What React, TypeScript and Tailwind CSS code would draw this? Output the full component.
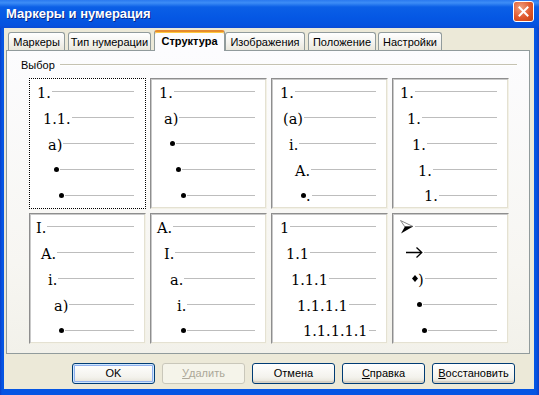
import React from "react";

type Item = { indent: number; text?: string; kind?: "dot" | "dotPeriod" | "arrowhead" | "arrow" | "diamond" };

const cells: Item[][] = [
  [
    { indent: 8, text: "1." },
    { indent: 14, text: "1.1." },
    { indent: 19, text: "a)" },
    { indent: 25, kind: "dot" },
    { indent: 30, kind: "dot" },
  ],
  [
    { indent: 9, text: "1." },
    { indent: 14, text: "a)" },
    { indent: 20, kind: "dot" },
    { indent: 26, kind: "dot" },
    { indent: 31, kind: "dot" },
  ],
  [
    { indent: 9, text: "1." },
    { indent: 12, text: "(a)" },
    { indent: 18, text: "i." },
    { indent: 24, text: "A." },
    { indent: 30, kind: "dotPeriod" },
  ],
  [
    { indent: 8, text: "1." },
    { indent: 15, text: "1." },
    { indent: 20, text: "1." },
    { indent: 26, text: "1." },
    { indent: 32, text: "1." },
  ],
  [
    { indent: 7, text: "I." },
    { indent: 12, text: "A." },
    { indent: 19, text: "i." },
    { indent: 25, text: "a)" },
    { indent: 30, kind: "dot" },
  ],
  [
    { indent: 7, text: "A." },
    { indent: 14, text: "I." },
    { indent: 20, text: "a." },
    { indent: 27, text: "i." },
    { indent: 31, kind: "dot" },
  ],
  [
    { indent: 9, text: "1" },
    { indent: 15, text: "1.1" },
    { indent: 20, text: "1.1.1" },
    { indent: 26, text: "1.1.1.1" },
    { indent: 32, text: "1.1.1.1.1" },
  ],
  [
    { indent: 8, kind: "arrowhead" },
    { indent: 14, kind: "arrow" },
    { indent: 20, kind: "diamond" },
    { indent: 25, kind: "dot" },
    { indent: 30, kind: "dot" },
  ],
];

const tabs = [
  { label: "Маркеры", cls: "ml-[4px] w-[57px]" },
  { label: "Тип нумерации", cls: "ml-[3px] w-[83px]" },
  { label: "Структура", cls: "ml-[3px] w-[71px]", active: true },
  { label: "Изображения", cls: "ml-[0px] w-[80px]" },
  { label: "Положение", cls: "ml-[3px] w-[68px]" },
  { label: "Настройки", cls: "ml-[2px] w-[64px]" },
];

function Marker({ item }: { item: Item }) {
  if (item.kind === "dot") return <span className="h-[5px] w-[5px] shrink-0 rounded-full bg-black" />;
  if (item.kind === "dotPeriod")
    return (
      <span className="flex shrink-0 items-center">
        <span className="h-[5px] w-[5px] rounded-full bg-black" />
        <span className="pt-[3px] leading-none">.</span>
      </span>
    );
  if (item.kind === "arrowhead")
    return (
      <svg width="14" height="14" viewBox="0 0 14 14" className="shrink-0">
        <path d="M0.5 0.5 L13 6.5 L5 7 Z" fill="#fff" stroke="#888" strokeWidth="1" />
        <path d="M5 6.5 L13 6.5 L1 13.5 Z" fill="#000" />
      </svg>
    );
  if (item.kind === "arrow")
    return (
      <svg width="17" height="11" viewBox="0 0 17 11" className="shrink-0">
        <path d="M0 5.5 H15.5 M10.5 0.5 L15.8 5.5 L10.5 10.5" fill="none" stroke="#000" strokeWidth="1.3" />
      </svg>
    );
  if (item.kind === "diamond")
    return (
      <span className="flex shrink-0 items-center">
        <svg width="6" height="7" viewBox="0 0 6 7">
          <path d="M3 0 L6 3.5 L3 7 L0 3.5 Z" fill="#000" />
        </svg>
        <span className="pt-[3px] leading-none">)</span>
      </span>
    );
  return <span className="shrink-0 pt-[3px] leading-none">{item.text}</span>;
}

function Cell({ items, focused }: { items: Item[]; focused?: boolean }) {
  return (
    <div
      className={
        focused
          ? "flex h-[131px] w-[117px] flex-col border border-dotted border-black bg-white"
          : "flex h-[131px] w-[117px] flex-col border border-b-[#f3f1e6] border-l-[#8e8e8e] border-r-[#f3f1e6] border-t-[#8e8e8e] bg-white shadow-[inset_1px_1px_0_#c9c9c9,inset_-1px_-1px_0_#e4e1d2]"
      }
    >
      {items.map((item, i) => (
        <div key={i} className="-ml-px flex h-[26px] items-center pr-[11px]" style={{ paddingLeft: item.indent }}>
          <Marker item={item} />
          <span className="ml-[1px] h-px flex-1 bg-[#bdbdbd]" />
        </div>
      ))}
    </div>
  );
}

function Button({ children, disabled, isDefault }: { children: React.ReactNode; disabled?: boolean; isDefault?: boolean }) {
  const base = "flex h-[21px] w-[83px] items-center justify-center rounded-[3px] border text-[11px]";
  if (disabled)
    return <div className={`${base} border-[#c9c7ba] bg-[#f5f4ea] text-[#aca899]`}>{children}</div>;
  return (
    <div
      className={
        isDefault
          ? `${base} border-[#003c74] bg-[linear-gradient(to_bottom,#ffffff,#f3f2ec_70%,#e3e0d4)] shadow-[inset_0_0_0_1px_#cee7ff,inset_0_0_0_2px_#8fb0ee]`
          : `${base} border-[#003c74] bg-[linear-gradient(to_bottom,#ffffff,#f3f2ec_70%,#e3e0d4)] shadow-[inset_0_-2px_0_#d6d0c5]`
      }
    >
      {children}
    </div>
  );
}

export default function App() {
  return (
    <div className="flex h-[395px] w-[539px] flex-col overflow-hidden bg-[linear-gradient(to_right,#0a3fc9,#0555e3_2px,#0555e3_calc(100%-3px),#0a3fc9)] font-['Liberation_Sans',Arial,sans-serif] text-[11px] text-black">
      {/* title bar */}
      <div className="flex h-[28px] shrink-0 items-center justify-between bg-[linear-gradient(to_bottom,#2a79ef_0%,#3d8df6_10%,#0b5fe6_25%,#0558e4_60%,#0552df_90%,#0a4ad4_100%)] pl-[6px] pr-[5px]">
        <span className="text-[13px] font-bold text-white [text-shadow:1px_1px_#0a2a8a]">
          Маркеры и нумерация
        </span>
        <div className="-mt-[6px] flex h-[21px] w-[21px] items-center justify-center rounded-[3px] border border-white bg-[radial-gradient(circle_at_35%_30%,#f0a07f,#e0582d_55%,#c3400f)]">
          <svg width="11" height="11" viewBox="0 0 11 11">
            <path d="M1.5 1.5 L9.5 9.5 M9.5 1.5 L1.5 9.5" stroke="#fff" strokeWidth="2" strokeLinecap="square" />
          </svg>
        </div>
      </div>

      {/* body */}
      <div className="mb-[6px] ml-[4px] mr-[5px] flex flex-1 flex-col bg-[#ece9d8]">
        {/* tabs */}
        <div className="relative z-10 mt-[2px] -mb-px flex h-[21px] items-start">
          {tabs.map((t) =>
            t.active ? (
              <div
                key={t.label}
                className={`${t.cls} flex h-[21px] items-center justify-center rounded-t-[3px] border-x border-t-2 border-x-[#919b9c] border-t-[#e68b2c] bg-[#fcfcfe] pb-[1px] font-bold shadow-[inset_0_1px_0_#ffc73c]`}
              >
                {t.label}
              </div>
            ) : (
              <div
                key={t.label}
                className={`${t.cls} mt-[2px] flex h-[18px] items-center justify-center rounded-t-[3px] border-x border-t border-[#919b9c] bg-[linear-gradient(to_bottom,#ffffff,#f3f2ed_60%,#e9e7dc)] pt-[1px]`}
              >
                {t.label}
              </div>
            )
          )}
        </div>

        {/* panel */}
        <div className="ml-[2px] flex h-[304px] w-[524px] flex-col border border-[#919b9c] bg-[linear-gradient(to_bottom,#fcfcfe,#f7f6f2_70%,#f2f1ea)]">
          <div className="mt-[7px] flex h-[14px] items-center pl-[14px] pr-[12px]">
            <span>Выбор</span>
            <span className="ml-[5px] h-[2px] flex-1 border-t border-b border-t-[#c5c2b2] border-b-white" />
          </div>
          <div className="ml-[22px] mt-[6px] grid grid-cols-[repeat(4,117px)] gap-[4px] font-['DejaVu_Serif',serif] text-[14.5px]">
            {cells.map((c, i) => (
              <Cell key={i} items={c} focused={i === 0} />
            ))}
          </div>
        </div>

        {/* buttons */}
        <div className="mt-[9px] flex justify-end gap-[7px] pr-[19px]">
          <Button isDefault>OK</Button>
          <Button disabled>
            <span className="underline">У</span>далить
          </Button>
          <Button>Отмена</Button>
          <Button>
            <span className="underline">С</span>правка
          </Button>
          <Button>
            <span className="underline">В</span>осстановить
          </Button>
        </div>
      </div>
    </div>
  );
}
